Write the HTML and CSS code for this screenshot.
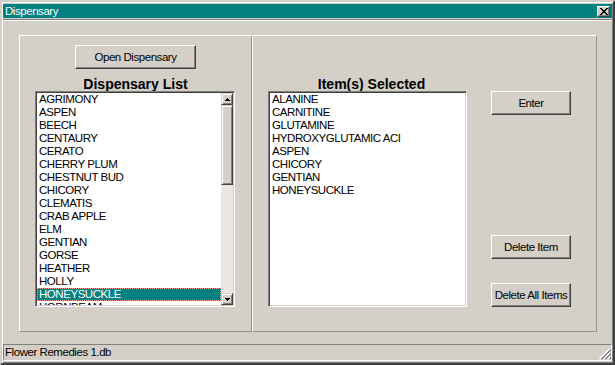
FILE: index.html
```html
<!DOCTYPE html>
<html>
<head>
<meta charset="utf-8">
<title>Dispensary</title>
<link rel="stylesheet" href="styles.css">
</head>
<body>
<div class="window">
  <div class="titlebar">
    <span class="title">Dispensary</span>
    <span class="close"><svg width="8" height="7" viewBox="0 0 8 7"><path fill="#000" d="M0 0h2v1H0z M6 0h2v1H6z M1 1h2v1H1z M5 1h2v1H5z M2 2h4v1H2z M3 3h2v1H3z M2 4h4v1H2z M1 5h2v1H1z M5 5h2v1H5z M0 6h2v1H0z M6 6h2v1H6z"/></svg></span>
  </div>
  <div class="sep"></div>
  <div class="content">
    <div class="panel panel-left">
      <button class="btn btn-open">Open Dispensary</button>
      <div class="heading heading-left">Dispensary List</div>
      <div class="listbox listbox-left">
        <div class="items">
          <div class="item">AGRIMONY</div>
          <div class="item">ASPEN</div>
          <div class="item">BEECH</div>
          <div class="item">CENTAURY</div>
          <div class="item">CERATO</div>
          <div class="item">CHERRY PLUM</div>
          <div class="item">CHESTNUT BUD</div>
          <div class="item">CHICORY</div>
          <div class="item">CLEMATIS</div>
          <div class="item">CRAB APPLE</div>
          <div class="item">ELM</div>
          <div class="item">GENTIAN</div>
          <div class="item">GORSE</div>
          <div class="item">HEATHER</div>
          <div class="item">HOLLY</div>
          <div class="item selected">HONEYSUCKLE</div>
          <div class="item">HORNBEAM</div>
        </div>
        <div class="scrollbar">
          <div class="sb-btn"><svg width="5" height="3" viewBox="0 0 5 3"><path fill="#000" d="M2 0h1v1H2z M1 1h3v1H1z M0 2h5v1H0z"/></svg></div>
          <div class="sb-thumb"></div>
          <div class="sb-track"></div>
          <div class="sb-btn"><svg width="5" height="3" viewBox="0 0 5 3"><path fill="#000" d="M0 0h5v1H0z M1 1h3v1H1z M2 2h1v1H2z"/></svg></div>
        </div>
      </div>
    </div>
    <div class="panel panel-right">
      <div class="sel-col">
        <div class="heading heading-right">Item(s) Selected</div>
        <div class="listbox listbox-right">
          <div class="items">
            <div class="item">ALANINE</div>
            <div class="item">CARNITINE</div>
            <div class="item">GLUTAMINE</div>
            <div class="item">HYDROXYGLUTAMIC ACI</div>
            <div class="item">ASPEN</div>
            <div class="item">CHICORY</div>
            <div class="item">GENTIAN</div>
            <div class="item">HONEYSUCKLE</div>
          </div>
        </div>
      </div>
      <div class="btn-col">
        <button class="btn btn-enter">Enter</button>
        <button class="btn btn-delete">Delete Item</button>
        <button class="btn btn-delete-all">Delete All Items</button>
      </div>
    </div>
  </div>
  <div class="status">
    <span class="status-text">Flower Remedies 1.db</span>
    <svg class="grip" width="12" height="12" viewBox="0 0 12 12" shape-rendering="crispEdges">
      <path stroke="#fff" d="M11 0.5 L0.5 11 M11 4.5 L4.5 11 M11 8.5 L8.5 11"/>
      <path stroke="#808080" d="M11.5 1.5 L1.5 11.5 M11.5 2.5 L2.5 11.5 M11.5 5.5 L5.5 11.5 M11.5 6.5 L6.5 11.5 M11.5 9.5 L9.5 11.5 M11.5 10.5 L10.5 11.5"/>
    </svg>
  </div>
</div>
</body>
</html>
```

FILE: styles.css
```css
* {
  box-sizing: border-box;
}

body {
  margin: 0;
  background: #d4d0c8;
  font-family: "Liberation Sans", Arial, sans-serif;
  font-size: 11.5px;
  letter-spacing: -0.45px;
  color: #000;
}

.window {
  width: 615px;
  height: 365px;
  border: 2px solid;
  border-color: #d4d0c8 #404040 #404040 #d4d0c8;
  box-shadow: inset 1px 1px #fff, inset -1px -1px #808080;
  padding: 2px 1px 2px 1px;
  display: flex;
  flex-direction: column;
  background: #d4d0c8;
}

.titlebar {
  height: 14px;
  background: #008080;
  color: #fff;
  display: flex;
  align-items: center;
  justify-content: space-between;
  padding: 0 2px 0 2px;
  line-height: 14px;
}

.close {
  width: 13px;
  height: 11px;
  background: #d4d0c8;
  border: 1px solid;
  border-color: #fff #404040 #404040 #fff;
  box-shadow: inset -1px -1px #808080;
  display: flex;
  align-items: center;
  justify-content: center;
}

.close svg {
  display: block;
}

.sep {
  height: 2px;
  margin-top: 1px;
  border-top: 1px solid #808080;
  border-bottom: 1px solid #fff;
}

.content {
  display: flex;
  margin: 14px 0 0 16px;
  height: 297px;
}

.panel {
  border: 1px solid;
  border-color: #fff #9a917e #9a917e #fff;
  height: 297px;
}

.panel-left {
  width: 233px;
  display: flex;
  flex-direction: column;
  align-items: flex-start;
  padding-top: 9px;
}

.btn {
  font: inherit;
  letter-spacing: inherit;
  color: #000;
  background: #d4d0c8;
  border: 1px solid;
  border-color: #fff #404040 #404040 #fff;
  box-shadow: inset -1px -1px #808080;
  padding: 0;
  height: 24px;
  display: flex;
  align-items: center;
  justify-content: center;
  white-space: nowrap;
}

.btn-open {
  width: 121px;
  margin-left: 55px;
}

.heading {
  font-size: 14px;
  font-weight: bold;
  line-height: 14px;
  letter-spacing: 0;
  text-align: center;
  white-space: nowrap;
}

.heading-left {
  width: 231px;
  margin-top: 8px;
}

.listbox {
  background: #fff;
  border: 1px solid;
  border-color: #808080 #fff #fff #808080;
  box-shadow: inset 1px 1px #404040, inset -1px -1px #d4d0c8;
  padding: 1px;
  height: 216px;
  display: flex;
  overflow: hidden;
}

.listbox-left {
  width: 200px;
  margin-left: 15px;
}

.items {
  flex: 1;
  overflow: hidden;
}

.item {
  height: 13px;
  line-height: 13px;
  padding-left: 2px;
  white-space: nowrap;
}

.item.selected {
  background: #008080;
  color: #fff;
  outline: 1px dotted #ffa090;
  outline-offset: -1px;
}

.scrollbar {
  width: 12px;
  display: flex;
  flex-direction: column;
}

.sb-btn {
  height: 12px;
  background: #d4d0c8;
  border: 1px solid;
  border-color: #d4d0c8 #404040 #404040 #d4d0c8;
  box-shadow: inset 1px 1px #fff, inset -1px -1px #808080;
  display: flex;
  align-items: center;
  justify-content: center;
}

.sb-btn svg {
  display: block;
}

.sb-thumb {
  height: 80px;
  background: #d4d0c8;
  border: 1px solid;
  border-color: #d4d0c8 #404040 #404040 #d4d0c8;
  box-shadow: inset 1px 1px #fff, inset -1px -1px #808080;
}

.sb-track {
  flex: 1;
  background: #eae7e2;
}

.panel-right {
  width: 345px;
  display: flex;
  padding-top: 41px;
}

.sel-col {
  display: flex;
  flex-direction: column;
  margin-left: 15px;
  width: 199px;
}

.heading-right {
  padding-left: 8px;
}

.listbox-right {
  width: 199px;
}

.btn-col {
  display: flex;
  flex-direction: column;
  margin-left: 24px;
}

.btn-col .btn {
  width: 80px;
}

.btn-enter {
  margin-top: 14px;
}

.btn-delete {
  margin-top: 120px;
}

.btn-delete-all {
  margin-top: 24px;
}

.status {
  margin-top: 12px;
  height: 17px;
  border: 1px solid;
  border-color: #808080 #fff #fff #808080;
  display: flex;
  justify-content: space-between;
  align-items: flex-end;
  padding-left: 1px;
}

.status-text {
  line-height: 15px;
  align-self: flex-start;
}

.grip {
  display: block;
}
```
